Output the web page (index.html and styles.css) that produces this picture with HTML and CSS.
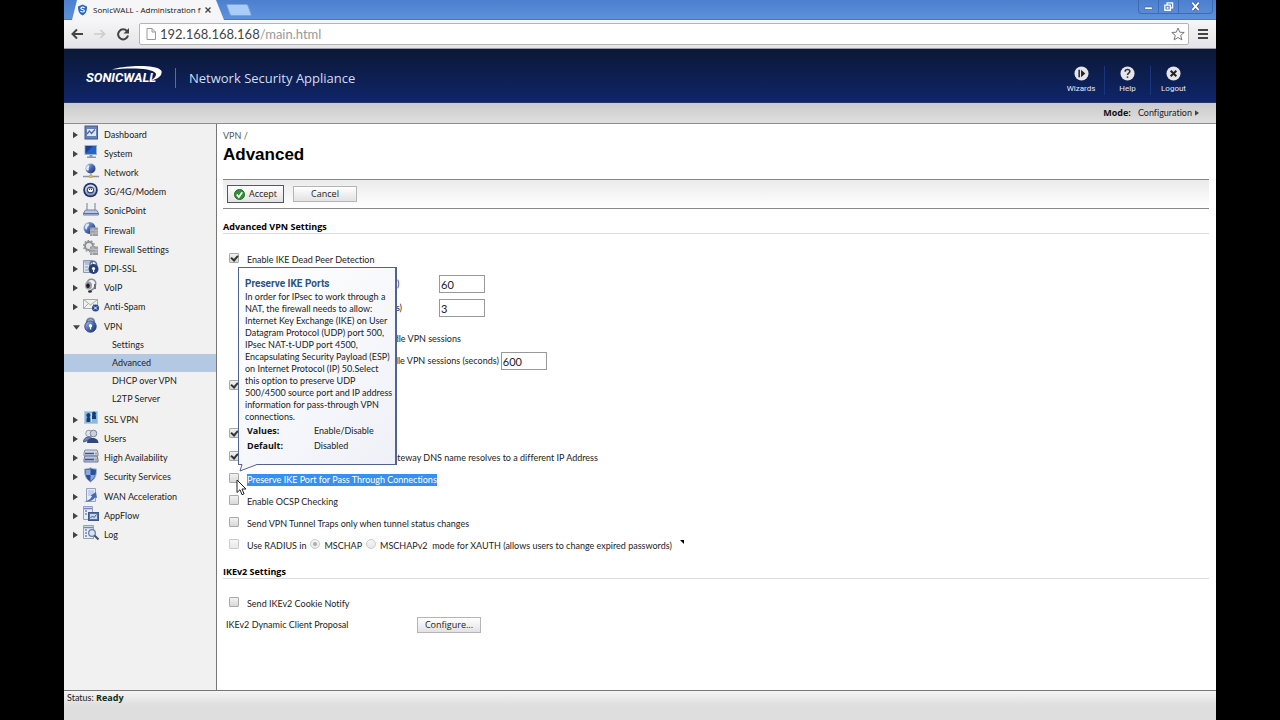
FILE: index.html
```
<!DOCTYPE html>
<html lang="en">
<head>
<meta charset="UTF-8" />
<meta name="viewport" content="width=device-width, initial-scale=1" />
<title>SonicWALL - Administration</title>
<link rel="stylesheet" href="styles.css">
</head>
<body>

<!-- Icon set -->
<svg class="sprite" aria-hidden="true">
  <defs>
    <linearGradient id="blue" x1="0" y1="0" x2="1" y2="1"><stop offset="0" stop-color="#b9cdf0" /><stop offset=".5" stop-color="#4a6bb5" /><stop offset="1" stop-color="#16245c" /></linearGradient>
    <linearGradient id="steel" x1="0" y1="0" x2="0" y2="1"><stop offset="0" stop-color="#e4e9f2" /><stop offset="1" stop-color="#8494b4" /></linearGradient>
  </defs>
  <symbol id="i-dashboard" viewBox="0 0 16 16"><rect x="2" y="1" width="12.500" height="13" fill="#6682b8" stroke="#41598f" /><rect x="4" y="4" width="9" height="7" fill="#dce7f8" /><path d="M4 9l2.500-3 2 2.500L12 4.500" fill="none" stroke="#4565a8" stroke-width="1.200" /></symbol>
  <symbol id="i-system" viewBox="0 0 16 16"><rect x="2" y="1.500" width="11.500" height="9" fill="#2563c4" stroke="#9fb0cc" /><path d="M2.500 9.500L10 2H2.500z" fill="#1c3f99" /><path d="M6.500 11h3v1.500H13V14H4v-1.500h2.500z" fill="#8a96ac" /></symbol>
  <symbol id="i-network" viewBox="0 0 16 16"><path d="M0 13.500h16M8 11v3" stroke="#8c93a3" stroke-width="1.500" /><circle cx="7.500" cy="5.500" r="5" fill="url(#blue)" /><path d="M4 3c2-2 3 0 2 1.500s1 2.500-1 3S2.500 5 4 3z" fill="#dce9ff" /><rect x="6" y="12" width="3.500" height="3" fill="#d7b54c" /></symbol>
  <symbol id="i-modem" viewBox="0 0 16 16"><circle cx="7.500" cy="8" r="7.300" fill="#24346b" /><circle cx="7.500" cy="8" r="5.600" fill="url(#steel)" /><circle cx="7.500" cy="8" r="3.600" fill="#344985" /><path d="M5 6.500h5v2l-1 1.500H6L5 8.500z" fill="#fff" /><path d="M6.500 7v1M8.500 7v1" stroke="#24346b" /></symbol>
  <symbol id="i-sonicpoint" viewBox="0 0 16 16"><path d="M4 9.500V2M12 9.500V2" stroke="#8592ad" stroke-width="1.200" /><path d="M2.500 9h11l2 3v2H.5v-2z" fill="#bac6df" stroke="#7182a8" /><path d="M1 12.500h14" stroke="#5c6d96" /></symbol>
  <symbol id="i-firewall" viewBox="0 0 16 16"><circle cx="6.500" cy="7" r="6" fill="url(#blue)" /><path d="M3 3.500c3-2.500 4 .5 2 2s0 3-1.500 3S1.500 5.500 3 3.500z" fill="#dce9ff" /><rect x="7" y="6.500" width="8" height="8.500" fill="#9b9da3" /><path d="M7 9.300h8M7 12.200h8M10 6.500v3M13 9.500v3M9.500 12v3" stroke="#c9cbd0" stroke-width=".7" /></symbol>
  <symbol id="i-fwsettings" viewBox="0 0 16 16"><circle cx="6" cy="6" r="4" fill="#e6e6e8" stroke="#8e9096" stroke-width="2" /><circle cx="6" cy="6" r="5.500" fill="none" stroke="#8e9096" stroke-width="1.300" stroke-dasharray="1.700 1.700" /><rect x="7" y="6.500" width="8" height="8.500" fill="#9b9da3" /><path d="M7 9.300h8M7 12.200h8M10 6.500v3M13 9.500v3M9.500 12v3" stroke="#d2d3d7" stroke-width=".7" /></symbol>
  <symbol id="i-dpissl" viewBox="0 0 16 16"><path d="M.5 1.500h9v12h-9z" fill="#dce4f2" stroke="#8797b8" /><path d="M2 5h4M2 8h3M2 11h3M1 3h8" stroke="#8397c4" /><path d="M7 8V5.500a3.300 3.300 0 016.600 0V8" fill="none" stroke="#64718d" stroke-width="1.500" /><circle cx="10.500" cy="10" r="5" fill="#293f7e" /><circle cx="10.500" cy="9.500" r="1.600" fill="#fff" /><path d="M10 10.500h1.200v2.500H10z" fill="#fff" /></symbol>
  <symbol id="i-voip" viewBox="0 0 16 16"><path d="M4 7C3.500 3 6 .8 9 1.300s4.500 3 3.500 6-2 4.500-5 5" fill="none" stroke="#8b8e96" stroke-width="1.500" /><ellipse cx="5.500" cy="7.500" rx="3.500" ry="4" fill="#9a9da5" /><ellipse cx="5" cy="7.800" rx="1.800" ry="2.300" fill="#1d1e22" /><path d="M12 6v5" stroke="#6d7078" stroke-width="2" /><ellipse cx="7" cy="13.500" rx="2" ry="1.200" fill="#2c2d31" /></symbol>
  <symbol id="i-antispam" viewBox="0 0 16 16"><path d="M.5 2.500h14v9H.5z" fill="#edf2ee" stroke="#a4ada9" /><path d="M.5 2.500l7 5.500 7-5.500M.5 11.500l5-5M14.500 11.500l-5-5" fill="none" stroke="#a4ada9" /><circle cx="12.500" cy="11" r="3.500" fill="#294991" /><path d="M11 9.500l3 3M14 9.500l-3 3" stroke="#fff" /></symbol>
  <symbol id="i-vpn" viewBox="0 0 16 16"><path d="M3.800 7V4.700a3.800 3.800 0 017.500 0V7" fill="none" stroke="#75839f" stroke-width="1.800" /><circle cx="7.500" cy="9.500" r="5.700" fill="url(#blue)" stroke="#33487f" /><circle cx="7.500" cy="8.800" r="1.700" fill="#fff" /><path d="M6.900 9.500h1.300v3H6.900z" fill="#fff" /></symbol>
  <symbol id="i-sslvpn" viewBox="0 0 16 16"><rect x="1.500" y="1.500" width="13" height="12" fill="#8bb5da" stroke="#b3cde5" /><path d="M3.500 12V8.500L4.500 7a2 2 0 112 0l1 1.500V12z" fill="#123f78" /><path d="M9 9V6l.5-1a2 2 0 113 0l.5 1v3z" fill="#123f78" /><path d="M8.200 3v9" stroke="#e7f3ff" /></symbol>
  <symbol id="i-users" viewBox="0 0 16 16"><circle cx="6" cy="4.500" r="3.300" fill="#e0e3e9" stroke="#8e97aa" /><circle cx="10.500" cy="4.500" r="3.300" fill="#cbd0da" stroke="#7a849a" /><path d="M.5 13c0-6 8-6 9-3z" fill="#6a84bc" stroke="#49608f" /><path d="M4 14c0-6 11-7 11.500 0z" fill="#30457d" /></symbol>
  <symbol id="i-ha" viewBox="0 0 16 16"><path d="M2 2h12l1 3v3H1V5z" fill="#cfd8e9" stroke="#7f8ca9" /><path d="M2 8h12l1 3v3H1v-3z" fill="#b9c5dc" stroke="#68789c" /><path d="M2 5.500h9M2 11.500h9" stroke="#42557f" stroke-width="1.500" /><path d="M12 5.500h2M12 11.500h2" stroke="#cf9a44" stroke-width="1.500" /></symbol>
  <symbol id="i-security" viewBox="0 0 16 16"><path d="M7.500.8c2 1 4 1.300 6 1.200 0 6-1 10-6 13C2.500 12 1.500 8 1.500 2c2 .1 4-.2 6-1.200z" fill="#2e4f9c" stroke="#a8b3ca" /><path d="M7.500 2v6H3C2.600 6 2.500 4.800 2.500 3c2 0 3.500-.3 5-1zM7.500 8H12c-.8 2.600-2 4.300-4.500 6z" fill="#89a8df" /></symbol>
  <symbol id="i-wan" viewBox="0 0 16 16"><path d="M3.500 1.500h9v13h-9z" fill="#e4ebf8" stroke="#93a2c0" /><path d="M5 4h6M5 6h6M5 8h4" stroke="#a9b9da" /><path d="M1 14c4 0 7-2 8-5L7.500 8.500 13 5l1 6-1.800-.8C10 13.500 6 15.500 1 14z" fill="#4668b8" /></symbol>
  <symbol id="i-appflow" viewBox="0 0 16 16"><path d="M.5.500h9v13h-9z" fill="#e7ecf6" stroke="#93a1bd" /><path d="M1 2.500h8M2 5h2M2 8h2" stroke="#6e87bd" stroke-width="1.500" /><rect x="5.500" y="6.500" width="10" height="8" fill="#56719f" stroke="#3f5785" /><rect x="7" y="8" width="7" height="5" fill="#c8d7ee" /><path d="M7.500 12l2-2 1.500 1.500 2.500-3" fill="none" stroke="#3c5894" /></symbol>
  <symbol id="i-log" viewBox="0 0 16 16"><path d="M.5.500h10v13H.5z" fill="#e7ecf6" stroke="#93a1bd" /><path d="M1 2.500h9M2 5h2M2 8h2M2 11h2" stroke="#6e87bd" stroke-width="1.500" /><circle cx="9" cy="8" r="3.300" fill="#d5e4f8" stroke="#6c7f9f" stroke-width="1.300" /><path d="M11.500 10.500l4 4" stroke="#44536f" stroke-width="2" /></symbol>
</svg>

<div class="window">

  <!-- Browser tabs -->
  <div class="tabstrip">
    <div class="tab">
      <svg class="favicon" viewBox="0 0 10 12"><path d="M5 0l5 2c0 5-1 8-5 10C1 10 0 7 0 2z" fill="#2f67bd" /><path d="M7.300 3.500c-2-1.300-4.500-.5-4 1 .4 1.300 3.700.7 3.700 2.400 0 1.500-2.500 1.700-4.300.6" fill="none" stroke="#fff" stroke-width="1.300" /></svg>
      <span class="tab-title">SonicWALL - Administration f</span>
      <button class="tab-close" aria-label="Close tab"><svg viewBox="0 0 8 8"><path d="M1.500 1.500l5 5M6.500 1.500l-5 5" stroke="#444" stroke-width="1.400" /></svg></button>
    </div>
    <button class="new-tab" aria-label="New tab"></button>
    <div class="window-buttons">
      <button aria-label="Minimize"><svg viewBox="0 0 12 10"><rect x="2" y="5.500" width="8" height="2.500" fill="#fff" stroke="#35558f" stroke-width=".6" /></svg></button>
      <button aria-label="Restore"><svg viewBox="0 0 12 10"><path d="M4.500 3V1h6v5.500h-2M2 3.500h6V9H2z" fill="none" stroke="#fff" stroke-width="1.400" /><rect x="4" y="5.300" width="2" height="2" fill="#fff" /></svg></button>
      <button class="wide" aria-label="Close window"><svg viewBox="0 0 12 10"><path d="M3 1.500l6 7M9 1.500l-6 7" stroke="#35558f" stroke-width="3" /><path d="M3 1.500l6 7M9 1.500l-6 7" stroke="#fff" stroke-width="1.700" /></svg></button>
    </div>
  </div>

  <!-- Browser toolbar -->
  <div class="toolbar">
    <button aria-label="Back"><svg viewBox="0 0 14 14"><path d="M13 7H3M7 2.500L2.500 7 7 11.500" fill="none" stroke="#444" stroke-width="2" /></svg></button>
    <button aria-label="Forward"><svg viewBox="0 0 14 14"><path d="M1 7h10M7.500 3L11.500 7l-4 4" fill="none" stroke="#ccc" stroke-width="1.600" /></svg></button>
    <button aria-label="Reload"><svg viewBox="0 0 14 14"><path d="M11 4.200A5 5 0 1012 8.500" fill="none" stroke="#444" stroke-width="2" /><path d="M13 1v5.500H7.500z" fill="#444" /></svg></button>
    <div class="address">
      <svg class="page-icon" viewBox="0 0 10 12"><path d="M1 .5h5l3.500 3.500v7.500H1z" fill="#fff" stroke="#999" /><path d="M6 .5V4h3.500" fill="none" stroke="#999" /></svg>
      <span class="url">192.168.168.168<span>/main.html</span></span>
      <button aria-label="Bookmark"><svg viewBox="0 0 14 14"><path d="M7 1l1.700 4.200 4.500.3-3.500 2.900 1.200 4.500L7 10.500l-3.900 2.400 1.200-4.500L.8 5.500l4.500-.3z" fill="#fff" stroke="#777" /></svg></button>
    </div>
    <button class="menu" aria-label="Menu"><svg viewBox="0 0 14 14"><path d="M2 3h10M2 7h10M2 11h10" stroke="#444" stroke-width="2" /></svg></button>
  </div>

  <!-- Appliance header -->
  <header>
    <div class="logo">SONICWALL
      <svg viewBox="0 0 50 20"><path d="M0 3.500C14-1 46-2 49.500 5c1 5-4 8-10.500 9.500 4-3 6-5 4.500-7.500C40 2 18 1.500 0 3.500z" fill="#fff" /></svg>
    </div>
    <div class="product">Network Security Appliance</div>
    <nav class="actions">
      <a href="#"><svg viewBox="0 0 16 16"><circle cx="8" cy="8" r="7.500" fill="#e4e4ea" /><path d="M5.500 4v8" stroke="#222" stroke-width="1.600" /><path d="M7.500 4l4.500 4-4.500 4z" fill="#222" /></svg>Wizards</a>
      <a href="#"><svg viewBox="0 0 16 16"><circle cx="8" cy="8" r="7.500" fill="#e4e4ea" /><path d="M5.500 6c0-3 5-3 5-.3C10.500 7.500 8 7.500 8 9.500" fill="none" stroke="#333" stroke-width="1.700" /><circle cx="8" cy="11.800" r="1" fill="#333" /></svg>Help</a>
      <a href="#"><svg viewBox="0 0 16 16"><circle cx="8" cy="8" r="7.500" fill="#e4e4ea" /><path d="M5 5l6 6M11 5l-6 6" stroke="#222" stroke-width="2.200" /></svg>Logout</a>
    </nav>
  </header>

  <div class="modebar"><b>Mode:</b> <a href="#">Configuration <svg class="arrow" viewBox="0 0 6 8"><path d="M0 0l6 4-6 4z" /></svg></a></div>

  <div class="body">

    <!-- Sidebar -->
    <nav class="sidebar">
      <ul class="tree">
        <li><a href="#"><svg class="arrow" viewBox="0 0 6 8"><path d="M0 0l6 4-6 4z" /></svg><svg class="icon"><use href="#i-dashboard" /></svg>Dashboard</a></li>
        <li><a href="#"><svg class="arrow" viewBox="0 0 6 8"><path d="M0 0l6 4-6 4z" /></svg><svg class="icon"><use href="#i-system" /></svg>System</a></li>
        <li><a href="#"><svg class="arrow" viewBox="0 0 6 8"><path d="M0 0l6 4-6 4z" /></svg><svg class="icon"><use href="#i-network" /></svg>Network</a></li>
        <li><a href="#"><svg class="arrow" viewBox="0 0 6 8"><path d="M0 0l6 4-6 4z" /></svg><svg class="icon"><use href="#i-modem" /></svg>3G/4G/Modem</a></li>
        <li><a href="#"><svg class="arrow" viewBox="0 0 6 8"><path d="M0 0l6 4-6 4z" /></svg><svg class="icon"><use href="#i-sonicpoint" /></svg>SonicPoint</a></li>
        <li><a href="#"><svg class="arrow" viewBox="0 0 6 8"><path d="M0 0l6 4-6 4z" /></svg><svg class="icon"><use href="#i-firewall" /></svg>Firewall</a></li>
        <li><a href="#"><svg class="arrow" viewBox="0 0 6 8"><path d="M0 0l6 4-6 4z" /></svg><svg class="icon"><use href="#i-fwsettings" /></svg>Firewall Settings</a></li>
        <li><a href="#"><svg class="arrow" viewBox="0 0 6 8"><path d="M0 0l6 4-6 4z" /></svg><svg class="icon"><use href="#i-dpissl" /></svg>DPI-SSL</a></li>
        <li><a href="#"><svg class="arrow" viewBox="0 0 6 8"><path d="M0 0l6 4-6 4z" /></svg><svg class="icon"><use href="#i-voip" /></svg>VoIP</a></li>
        <li><a href="#"><svg class="arrow" viewBox="0 0 6 8"><path d="M0 0l6 4-6 4z" /></svg><svg class="icon"><use href="#i-antispam" /></svg>Anti-Spam</a></li>
        <li><a href="#"><svg class="arrow open" viewBox="0 0 8 8"><path d="M0 2h8L4 7z" /></svg><svg class="icon"><use href="#i-vpn" /></svg>VPN</a>
          <ul class="submenu">
            <li><a href="#">Settings</a></li>
            <li><a href="#" class="active">Advanced</a></li>
            <li><a href="#">DHCP over VPN</a></li>
            <li><a href="#">L2TP Server</a></li>
          </ul>
        </li>
        <li><a href="#"><svg class="arrow" viewBox="0 0 6 8"><path d="M0 0l6 4-6 4z" /></svg><svg class="icon"><use href="#i-sslvpn" /></svg>SSL VPN</a></li>
        <li><a href="#"><svg class="arrow" viewBox="0 0 6 8"><path d="M0 0l6 4-6 4z" /></svg><svg class="icon"><use href="#i-users" /></svg>Users</a></li>
        <li><a href="#"><svg class="arrow" viewBox="0 0 6 8"><path d="M0 0l6 4-6 4z" /></svg><svg class="icon"><use href="#i-ha" /></svg>High Availability</a></li>
        <li><a href="#"><svg class="arrow" viewBox="0 0 6 8"><path d="M0 0l6 4-6 4z" /></svg><svg class="icon"><use href="#i-security" /></svg>Security Services</a></li>
        <li><a href="#"><svg class="arrow" viewBox="0 0 6 8"><path d="M0 0l6 4-6 4z" /></svg><svg class="icon"><use href="#i-wan" /></svg>WAN Acceleration</a></li>
        <li><a href="#"><svg class="arrow" viewBox="0 0 6 8"><path d="M0 0l6 4-6 4z" /></svg><svg class="icon"><use href="#i-appflow" /></svg>AppFlow</a></li>
        <li><a href="#"><svg class="arrow" viewBox="0 0 6 8"><path d="M0 0l6 4-6 4z" /></svg><svg class="icon"><use href="#i-log" /></svg>Log</a></li>
      </ul>
    </nav>

    <!-- VPN advanced settings -->
    <main>
      <div class="crumb">VPN /</div>
      <h1>Advanced</h1>
      <div class="buttons">
        <button class="btn accept"><svg viewBox="0 0 12 12"><circle cx="6" cy="6" r="5.500" fill="#2f8f35" stroke="#1d6424" /><path d="M3 6l2.300 2.800L9 3.500" fill="none" stroke="#fff" stroke-width="1.800" /></svg>Accept</button>
        <button class="btn">Cancel</button>
      </div>

      <h2>Advanced VPN Settings</h2>
      <div class="settings">
        <div class="row tall"><input type="checkbox" id="dpd" checked><label for="dpd">Enable IKE Dead Peer Detection</label></div>
        <div class="row tall indent"><label class="name" for="interval">Dead Peer Detection Interval (seconds)</label><input type="text" id="interval" value="60"></div>
        <div class="row tall indent"><label class="name" for="trigger">Failure Trigger Level (missed heartbeats)</label><input type="text" id="trigger" value="3"></div>
        <div class="row group indent"><input type="checkbox" id="idle"><label for="idle">Enable Dead Peer Detection for Idle VPN sessions</label></div>
        <div class="row deep"><label for="idle-interval">Dead Peer Detection Interval for Idle VPN sessions (seconds)</label><input type="text" id="idle-interval" value="600"></div>
        <div class="row tall fragments"><input type="checkbox" aria-label="Enable Fragmented Packet Handling" checked></div>
        <div class="row tall nat"><input type="checkbox" aria-label="Enable NAT Traversal" checked></div>
        <div class="row"><input type="checkbox" id="clean" checked><label for="clean">Clean up Active tunnels when Peer Gateway DNS name resolves to a different IP Address</label></div>
        <div class="row anchor">
          <input type="checkbox" id="ports"><label for="ports" class="selected">Preserve IKE Port for Pass Through Connections</label>
          <div class="tooltip" role="tooltip">
            <h3>Preserve IKE Ports</h3>
            <p>In order for IPsec to work through a NAT, the firewall needs to allow: Internet Key Exchange (IKE) on User Datagram Protocol (UDP) port 500, IPsec NAT-t-UDP port 4500, Encapsulating Security Payload (ESP) on Internet Protocol (IP) 50.Select this option to preserve UDP 500/4500 source port and IP address information for pass-through VPN connections.</p>
            <dl>
              <dt>Values:</dt><dd>Enable/Disable</dd>
              <dt>Default:</dt><dd>Disabled</dd>
            </dl>
            <svg class="tail" viewBox="0 0 22 9"><path d="M3 0v2L1 8 18 1.500V0" fill="#f5f6fb" /><path d="M3 1.500L1 8l17-6.500" fill="none" stroke="#51638f" /></svg>
          </div>
          <svg class="cursor" viewBox="0 0 11 17"><path d="M1 1v12.500l3-2.800 2 5 2-.9-2-4.800h4z" fill="#fff" stroke="#222" /></svg>
        </div>
        <div class="row"><input type="checkbox" id="ocsp"><label for="ocsp">Enable OCSP Checking</label></div>
        <div class="row"><input type="checkbox" id="traps"><label for="traps">Send VPN Tunnel Traps only when tunnel status changes</label></div>
        <div class="row">
          <input type="checkbox" id="radius" disabled><label for="radius">Use RADIUS in</label>
          <input type="radio" name="chap" id="chap1" checked disabled><label for="chap1">MSCHAP</label>
          <input type="radio" name="chap" id="chap2" disabled><label for="chap2">MSCHAPv2&nbsp; mode for XAUTH (allows users to change expired passwords)</label>
          <svg class="mark" viewBox="0 0 4 4"><path d="M0 0h4v4z" /></svg>
        </div>
      </div>

      <h2>IKEv2 Settings</h2>
      <div class="settings">
        <div class="row"><input type="checkbox" id="cookie"><label for="cookie">Send IKEv2 Cookie Notify</label></div>
        <div class="row proposal"><span>IKEv2 Dynamic Client Proposal</span><button class="btn">Configure...</button></div>
      </div>
    </main>
  </div>

  <footer>Status: <b>Ready</b></footer>
</div>

</body>
</html>
```

FILE: styles.css
```
/* Reset and basics */
* {margin: 0; padding: 0; box-sizing: border-box;}
body {
  background: #000;
  color: #222;
  font-family: Lato, "Noto Sans", sans-serif;
  font-size: 9px;
  line-height: 12px;
  font-variant-ligatures: none;
}
a {text-decoration: none; color: inherit;}
ul {list-style: none;}
b, h2, dt {font-family: "Open Sans", "Noto Sans", sans-serif;}
button, input {font: inherit; color: inherit;}
button {border: none; background: none;}
svg {display: block; flex: none;}
.sprite {
  position: absolute;
  width: 0;
  height: 0;
}
.arrow {
  width: 5px;
  height: 8px;
  fill: #444;
}

.window {
  display: flex;
  flex-direction: column;
  min-height: 100vh;
  margin: 0 5%;
  background: #fff;
}

/* Browser tabs */
.tabstrip {
  display: flex;
  height: 20px;
  padding-left: 8px;
  background: linear-gradient(#4c80cf, #5e90da);
  border-bottom: 1px solid #5577ac;
}
.tab {
  display: flex;
  align-items: center;
  width: 152px;
  height: 20px;
  padding: 0 6px;
  background: #f6f6f8;
  clip-path: polygon(5px 0, 144px 0, 152px 100%, 0 100%);
}
.favicon {
  width: 9px;
  height: 12px;
  margin-right: 6px;
}
.tab-title {
  flex: 1;
  white-space: nowrap;
  font-family: "Open Sans", "Noto Sans", sans-serif;
  font-size: 8px;
  color: #111;
}
.tab-close {
  margin-right: 6px;
}
.tab-close svg {
  width: 8px;
  height: 8px;
}
.new-tab {
  width: 22px;
  height: 12px;
  margin: 4px 0 0 4px;
  background: #a9cdf6;
  border: 1px solid #78a4dc;
  border-radius: 2px;
  transform: skewX(20deg);
}
.window-buttons {
  display: flex;
  height: 14px;
  margin: 0 3px 0 auto;
  border: 1px solid #3f6bb4;
  border-top: none;
  border-radius: 0 0 4px 4px;
}
.window-buttons button {
  width: 20px;
  padding: 1px 4px;
  border-right: 1px solid #3f6bb4;
}
.window-buttons .wide {
  width: 33px;
  padding: 1px 10px;
  border: none;
}

/* Browser toolbar */
.toolbar {
  display: flex;
  align-items: center;
  height: 29px;
  padding: 0 6px;
  background: linear-gradient(#f6f6f8, #e4e4e8);
  border-bottom: 1px solid #9a9aa4;
}
.toolbar button {
  width: 16px;
  margin-right: 7px;
}
.toolbar svg {
  width: 14px;
  height: 14px;
}
.address {
  display: flex;
  flex: 1;
  align-items: center;
  height: 22px;
  margin-right: 7px;
  padding: 0 1px 0 6px;
  background: #fff;
  border: 1px solid #b4b4b8;
  border-radius: 2px;
}
.address .page-icon {
  width: 10px;
  height: 12px;
}
.address button {
  margin: 0 0 0 auto;
}
.toolbar .menu {
  width: 14px;
  margin: 0;
}
.url {
  margin-left: 4px;
  font-size: 13px;
  line-height: 16px;
  color: #444;
}
.url span {
  color: #999;
}

/* Appliance header */
header {
  display: flex;
  align-items: center;
  height: 54px;
  padding: 4px 20px 0 22px;
  background: linear-gradient(#0b1836, #0f2569);
  border-bottom: 1px solid #24366f;
  color: #fff;
}
.logo {
  position: relative;
  width: 90px;
  font: italic bold 13px/20px "Liberation Sans Narrow", Roboto, sans-serif;
  border-right: 1px solid #5a6c9c;
}
.logo svg {
  position: absolute;
  left: 26px;
  top: -2px;
  width: 50px;
  height: 20px;
}
.product {
  margin-left: 13px;
  font-family: "Open Sans", "Noto Sans", sans-serif;
  font-size: 13px;
  line-height: 18px;
  color: #d5dcf0;
}
.actions {
  display: flex;
  margin: 5px 0 0 auto;
}
.actions a {
  display: flex;
  flex-direction: column;
  align-items: center;
  width: 46px;
  gap: 2px;
  font-family: Roboto, sans-serif;
  font-size: 8px;
  color: #e3e8f8;
}
.actions a + a {
  border-left: 1px solid #1b3480;
}
.actions svg {
  width: 15px;
  height: 15px;
}

.modebar {
  display: flex;
  justify-content: flex-end;
  align-items: center;
  gap: 7px;
  height: 21px;
  padding-right: 17px;
  background: linear-gradient(#cbcbcb, #dfdfdf);
  border-bottom: 1px solid #8e8e8e;
}
.modebar a {
  display: flex;
  align-items: center;
  gap: 3px;
}
.modebar .arrow {
  width: 4px;
  height: 6px;
}
.modebar b {
  color: #111;
}

/* Sidebar */
.body {
  display: flex;
  flex: 1;
}
.sidebar {
  flex: none;
  width: 153px;
  padding-top: 1px;
  background: #f1f1f1;
  border-right: 1px solid #777;
}
.tree a {
  display: flex;
  align-items: center;
  height: 19px;
  padding-left: 9px;
}
.tree > li:nth-child(5n) {
  margin-bottom: 1px;
}
.tree .icon {
  width: 16px;
  height: 16px;
  margin: 0 5px 4px;
}
.tree .open {
  width: 7px;
  margin-right: -2px;
}
.submenu {
  padding-bottom: 2px;
}
.submenu a {
  height: 18px;
  padding-left: 48px;
}
.submenu .active {
  background: #b3c8e3;
}

/* Main panel */
main {
  flex: 1;
  padding: 6px 7px 6px 6px;
}
.crumb {
  color: #555;
}
h1 {
  margin-top: 2px;
  font: bold 17px/22px "Liberation Sans", Arial, sans-serif;
  color: #000;
}
.buttons {
  display: flex;
  align-items: center;
  gap: 9px;
  height: 30px;
  margin-top: 13px;
  padding-left: 4px;
  background: linear-gradient(#ebebeb, #fff);
  border-top: 1px solid #888;
  border-bottom: 1px solid #888;
}
.btn {
  display: flex;
  align-items: center;
  justify-content: center;
  width: 64px;
  height: 16px;
  background: linear-gradient(#fff, #e2e2e2);
  border: 1px solid #b5b5b5;
  font-family: "Open Sans", "Noto Sans", sans-serif;
}
.accept {
  gap: 4px;
  width: 57px;
  height: 18px;
  border-color: #556;
}
.accept svg {
  width: 11px;
  height: 11px;
}
h2 {
  margin-top: 12px;
  border-bottom: 1px solid #ddd;
  font-size: 9px;
  line-height: 12px;
  color: #000;
}
.settings {
  padding: 14px 0 0 3px;
}
.settings + h2 {
  margin-top: 9px;
}
.row {
  display: flex;
  align-items: center;
  height: 22px;
  padding-left: 3px;
  white-space: nowrap;
}
.tall {
  height: 24px;
}
.indent {
  padding-left: 20px;
}
.deep {
  padding-left: 34px;
}
.group {
  margin-top: 8px;
}
.fragments {
  margin-top: 3px;
}
.nat {
  margin-top: 24px;
}
input[type="checkbox"],
input[type="radio"] {
  appearance: none;
  display: flex;
  flex: none;
  width: 10px;
  height: 10px;
  margin: 0 8px 4px 0;
  background: linear-gradient(#f2f2f2, #d9d9d9);
  border: 1px solid #a9a9a9;
  border-radius: 1px;
}
input[type="checkbox"]:checked::before {
  content: "";
  width: 6px;
  height: 3px;
  margin: 1px 0 0 1px;
  border: solid #333;
  border-width: 0 0 2px 2px;
  transform: rotate(-50deg);
}
input[type="radio"] {
  margin: 0 4px 4px;
  border-radius: 50%;
}
input[type="radio"]:checked::before {
  content: "";
  width: 4px;
  height: 4px;
  margin: 2px;
  background: #777;
  border-radius: 50%;
}
input:disabled {
  opacity: 0.6;
}
input[type="text"] {
  width: 46px;
  height: 18px;
  margin-left: 2px;
  padding-left: 1px;
  border: 1px solid #999;
  font-size: 11px;
}
.name {
  width: 191px;
}
.selected {
  background: #3390f5;
  color: #fff;
}
.mark {
  width: 4px;
  height: 4px;
  margin: 0 0 8px 8px;
}
.proposal {
  height: 20px;
  padding-left: 0;
}
.proposal span {
  width: 191px;
}

/* Help tooltip */
.anchor {
  position: relative;
}
.tooltip {
  position: absolute;
  left: 12px;
  bottom: calc(100% + 4px);
  z-index: 5;
  width: 159px;
  padding: 9px 2px 11px 6px;
  background: linear-gradient(135deg, #fff, #eff1f8);
  border: 1px solid #51638f;
  border-right-width: 2px;
  white-space: normal;
}
.tooltip h3 {
  font-family: Roboto, sans-serif;
  font-size: 10px;
  line-height: 14px;
  color: #2b5280;
}
.tooltip dl {
  display: grid;
  grid-template-columns: 67px 1fr;
  padding-left: 2px;
  line-height: 15px;
}
.tooltip dt {
  font-weight: bold;
  color: #111;
}
.tail {
  position: absolute;
  left: 0;
  top: calc(100% - 1px);
  width: 22px;
  height: 9px;
}
.cursor {
  position: absolute;
  left: 10px;
  top: 10px;
  z-index: 6;
  width: 11px;
  height: 17px;
}

/* Status bar */
footer {
  height: 30px;
  padding: 1px 3px;
  background: linear-gradient(#f5f5f5, #dedede 50%);
  border-top: 1px solid #777;
}
footer b {
  color: #10301a;
}
```
